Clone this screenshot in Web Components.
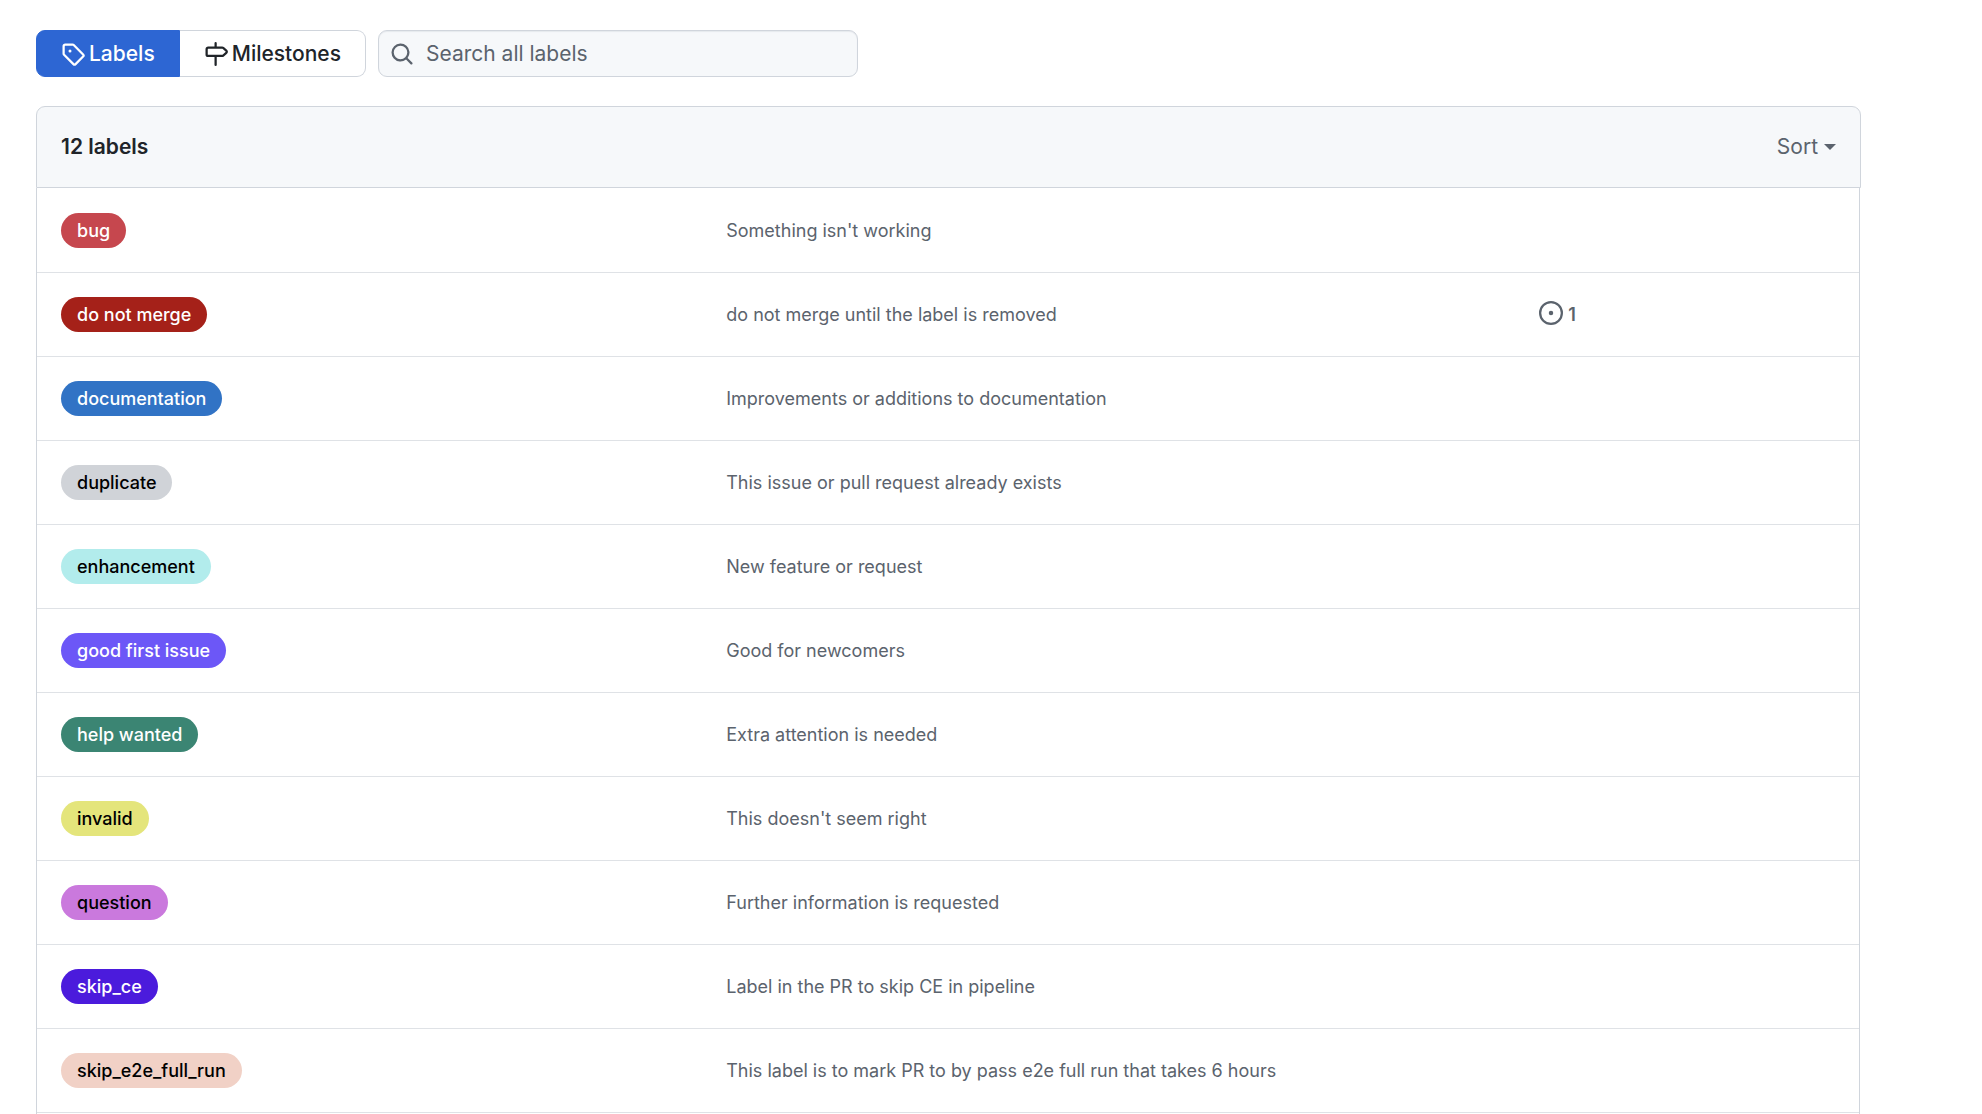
<!DOCTYPE html>
<html lang="en">
<head>
<meta charset="utf-8">
<title>Labels</title>
<style>
  html, body { margin: 0; height: 100%; background: #fff; }
  body {
    overflow: hidden;
    font-family: Inter, "Liberation Sans", sans-serif;
    color: #202429;
    --muted: #5b636d;
    --line: #d0d5dc;
    --soft-line: #dfe2e6;
    --subtle: #f6f8fa;
    --accent: #2d66d3;
  }
</style>
</head>
<body>
<labels-page></labels-page>
<script>
const ICONS = {
  tag: 'M1 7.775V2.75C1 1.784 1.784 1 2.75 1h5.025c.464 0 .91.184 1.238.513l6.25 6.25a1.75 1.75 0 0 1 0 2.474l-5.026 5.026a1.75 1.75 0 0 1-2.474 0l-6.25-6.25A1.752 1.752 0 0 1 1 7.775Zm1.5 0c0 .066.026.13.073.177l6.25 6.25a.25.25 0 0 0 .354 0l5.025-5.025a.25.25 0 0 0 0-.354l-6.25-6.25a.25.25 0 0 0-.177-.073H2.75a.25.25 0 0 0-.25.25ZM6 5a1 1 0 1 1 0 2 1 1 0 0 1 0-2Z',
  milestone: 'M7.75 0a.75.75 0 0 1 .75.75V3h3.634c.414 0 .814.147 1.13.414l2.07 1.75a1.75 1.75 0 0 1 0 2.672l-2.07 1.75a1.75 1.75 0 0 1-1.13.414H8.5v5.25a.75.75 0 0 1-1.5 0V10H2.75A1.75 1.75 0 0 1 1 8.25v-3.5C1 3.784 1.784 3 2.75 3H7V.75A.75.75 0 0 1 7.75 0Zm4.384 8.5a.25.25 0 0 0 .161-.06l2.07-1.75a.248.248 0 0 0 0-.38l-2.07-1.75a.25.25 0 0 0-.161-.06H2.75a.25.25 0 0 0-.25.25v3.5c0 .138.112.25.25.25h9.384Z',
  search: 'M10.68 11.74a6 6 0 0 1-7.922-8.982 6 6 0 0 1 8.982 7.922l3.04 3.04a.749.749 0 0 1-.326 1.275.749.749 0 0 1-.734-.215ZM11.5 7a4.499 4.499 0 1 0-8.997 0A4.499 4.499 0 0 0 11.5 7Z',
  issue: 'M8 9.5a1.5 1.5 0 1 0 0-3 1.5 1.5 0 0 0 0 3ZM8 0a8 8 0 1 1 0 16A8 8 0 0 1 8 0ZM1.5 8a6.5 6.5 0 1 0 13 0 6.5 6.5 0 0 0-13 0Z'
};

const LABELS = [
  ['bug', "Something isn't working", '#c6474e', '#fff'],
  ['do not merge', 'do not merge until the label is removed', '#a52119', '#fff', 1],
  ['documentation', 'Improvements or additions to documentation', '#3173c5', '#fff'],
  ['duplicate', 'This issue or pull request already exists', '#d0d3d8', '#000'],
  ['enhancement', 'New feature or request', '#b2ecec', '#000'],
  ['good first issue', 'Good for newcomers', '#6c57f7', '#fff'],
  ['help wanted', 'Extra attention is needed', '#3b8573', '#fff'],
  ['invalid', "This doesn't seem right", '#e4e57b', '#000'],
  ['question', 'Further information is requested', '#ca79dd', '#000'],
  ['skip_ce', 'Label in the PR to skip CE in pipeline', '#4b1bdc', '#fff'],
  ['skip_e2e_full_run', 'This label is to mark PR to by pass e2e full run that takes 6 hours', '#f1d1c6', '#000']
];

class Base extends HTMLElement {
  constructor() {
    super();
    this.attachShadow({ mode: 'open' });
  }
  connectedCallback() { this.shadowRoot.innerHTML = this.render(); }
}

customElements.define('oct-icon', class extends Base {
  render() {
    return `<style>
      :host { display: block; flex: none; width: 24px; height: 24px; }
      svg { display: block; width: 100%; height: 100%; fill: currentColor; }
    </style>
    <svg viewBox="0 0 16 16" aria-hidden="true"><path d="${ICONS[this.getAttribute('name')]}"/></svg>`;
  }
});

customElements.define('section-nav', class extends Base {
  render() {
    return `<style>
      :host { display: block; }
      nav { display: flex; }
      a {
        display: flex; align-items: center; gap: 4px; box-sizing: border-box; height: 47px; padding: 0 24px;
        border: 1px solid var(--line); color: inherit; text-decoration: none;
        font-size: 21px; font-weight: 500; line-height: 30px; white-space: nowrap;
      }
      a:first-child { border-radius: 9px 0 0 9px; }
      a:last-child { border-radius: 0 9px 9px 0; border-left: 0; }
      a[aria-current] { background: var(--accent); border-color: var(--accent); color: #fff; }
    </style>
    <nav aria-label="Labels and milestones">
      <a href="#labels" aria-current="page"><oct-icon name="tag"></oct-icon><span>Labels</span></a>
      <a href="#milestones"><oct-icon name="milestone"></oct-icon><span>Milestones</span></a>
    </nav>`;
  }
});

customElements.define('label-search', class extends Base {
  render() {
    return `<style>
      :host { display: block; width: 480px; }
      label {
        display: flex; align-items: center; gap: 12px; box-sizing: border-box; height: 47px; padding: 0 11px;
        border: 1px solid var(--line); border-radius: 9px; background: var(--subtle); color: var(--muted);
        box-shadow: inset 0 1px 1px #e6e9ed;
      }
      input {
        flex: 1; min-width: 0; padding: 0; border: 0; outline: 0; background: none;
        font-family: inherit; font-size: 21px; line-height: 30px; color: inherit;
      }
      input::placeholder { color: var(--muted); opacity: 1; }
    </style>
    <label><oct-icon name="search"></oct-icon><input type="text" placeholder="Search all labels" aria-label="Search all labels"></label>`;
  }
});

customElements.define('label-pill', class extends Base {
  render() {
    return `<style>
      :host { display: flex; }
      a {
        padding: 0 16px; border-radius: 18px; line-height: 35px; font-size: 18px; font-weight: 500;
        background: ${this.getAttribute('fill')}; color: ${this.getAttribute('ink')};
        text-decoration: none; white-space: nowrap;
      }
    </style><a href="#label"><slot></slot></a>`;
  }
});

customElements.define('label-row', class extends Base {
  render() {
    return `<style>
      :host {
        display: grid; grid-template-columns: 45fr 55fr 20fr; align-items: center;
        box-sizing: border-box; min-height: 84px; padding: 0 24px;
        border-top: 1px solid var(--soft-line); color: var(--muted); font-size: 18px; line-height: 27px;
      }
      :host(:first-child) { border-top-color: transparent; }
    </style>
    <slot name="label"></slot><slot></slot><slot name="issues"></slot>`;
  }
});

customElements.define('issue-count', class extends Base {
  render() {
    return `<style>
      :host { display: block; }
      a { display: flex; align-items: flex-start; gap: 5px; color: inherit; text-decoration: none; font-weight: 600; }
    </style><a href="#issues" aria-label="Open issues"><oct-icon name="issue"></oct-icon><slot></slot></a>`;
  }
});

customElements.define('labels-box', class extends Base {
  render() {
    return `<style>
      :host { display: block; }
      header {
        display: flex; justify-content: space-between; align-items: center; box-sizing: border-box; height: 82px;
        padding: 0 24px; border: 1px solid var(--line); border-radius: 9px 9px 0 0; background: var(--subtle);
      }
      h2 { margin: 0; font-size: 21px; font-weight: 600; line-height: 30px; }
      button {
        display: flex; align-items: center; gap: 6px; padding: 0; border: 0; background: none;
        font-family: inherit; font-size: 21px; line-height: 30px; color: var(--muted);
      }
      button::after { content: ""; border: 6px solid transparent; border-top-color: currentColor; border-bottom: 0; }
      section { margin-right: 1px; border: solid var(--line); border-width: 0 1px; }
    </style>
    <header><h2>12 labels</h2><button type="button">Sort</button></header>
    <section>
      ${LABELS.map(([name, text, fill, ink, open]) => `<label-row>
        <label-pill slot="label" fill="${fill}" ink="${ink}">${name}</label-pill>
        <span>${text}</span>
        ${open ? `<issue-count slot="issues">${open}</issue-count>` : ''}
      </label-row>`).join('')}
      <label-row></label-row>
    </section>`;
  }
});

customElements.define('labels-page', class extends Base {
  render() {
    return `<style>
      :host { display: block; padding: 30px 121px 0 36px; }
      .bar { display: flex; gap: 12px; margin-bottom: 29px; }
    </style>
    <div class="bar"><section-nav></section-nav><label-search></label-search></div>
    <labels-box></labels-box>`;
  }
});
</script>
</body>
</html>
